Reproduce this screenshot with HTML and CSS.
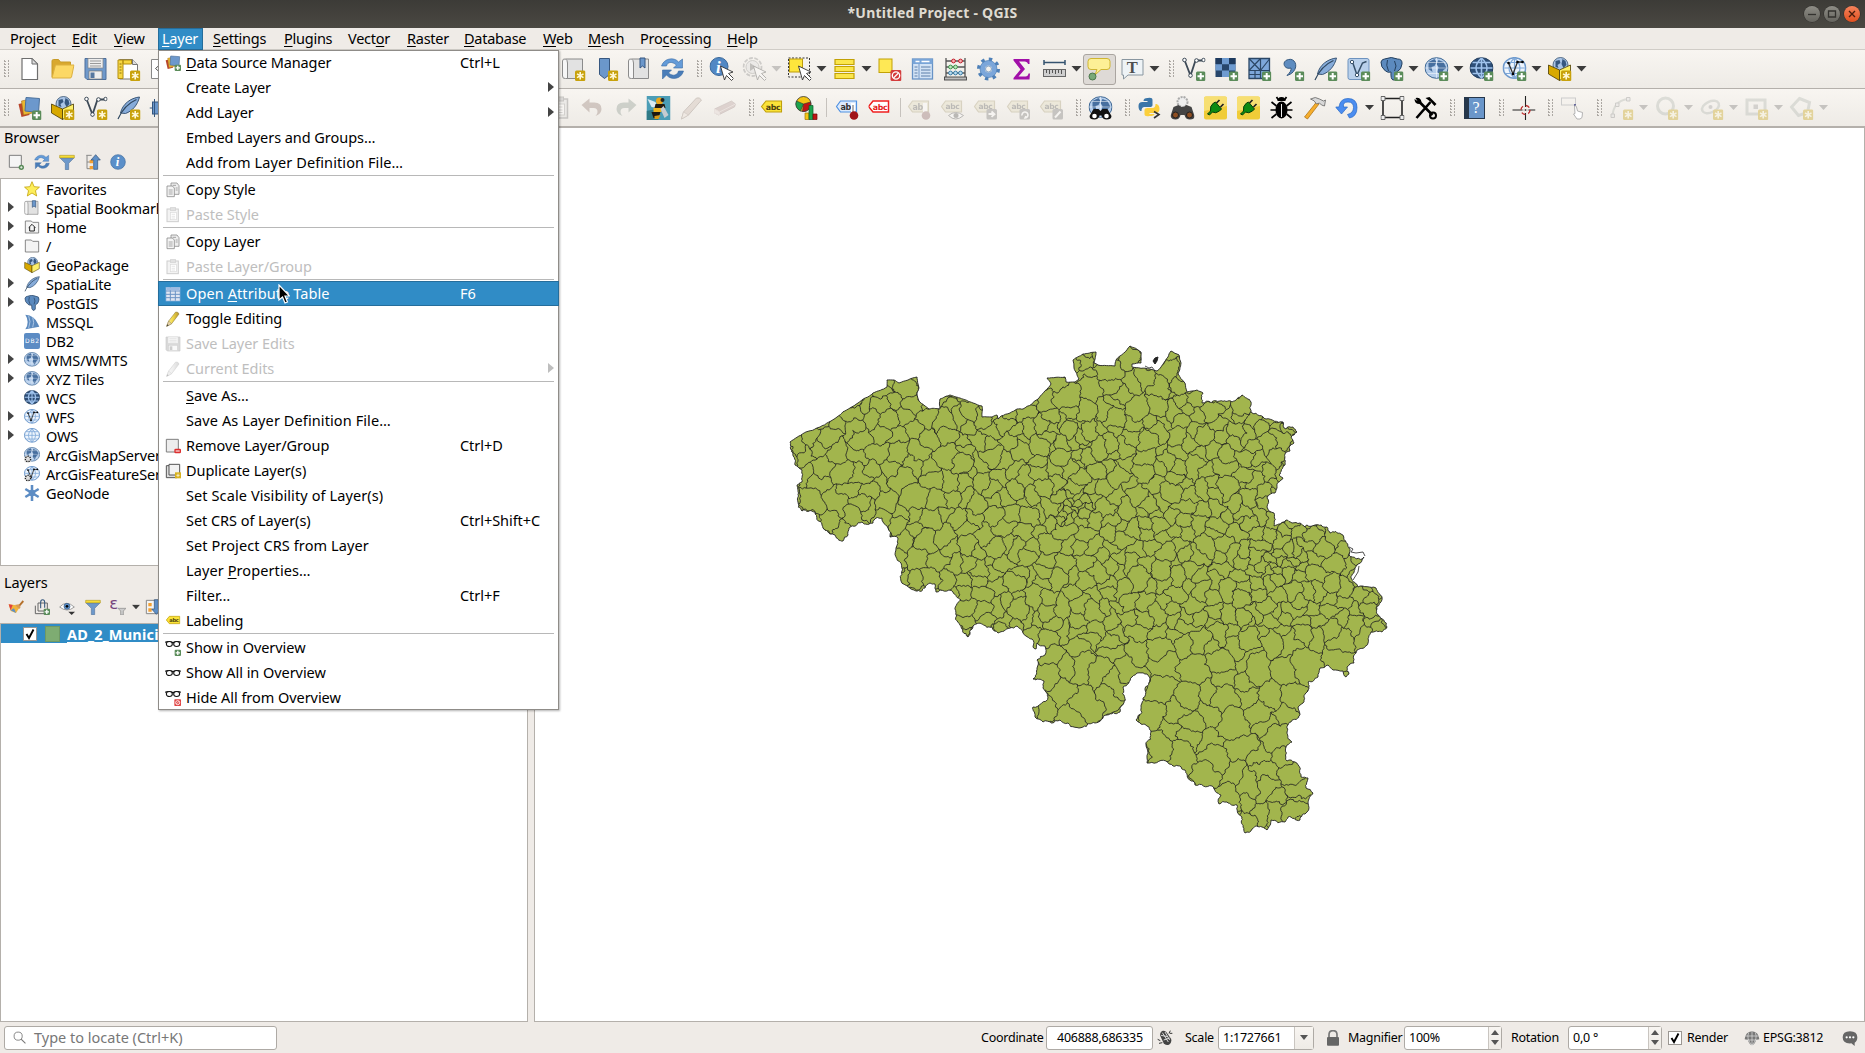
FILE: index.html
```html
<!DOCTYPE html>
<html lang="en">
<head>
<meta charset="utf-8">
<title>*Untitled Project - QGIS</title>
<link rel="stylesheet" href="styles.css">
</head>
<body>
<svg class="sprite" width="0" height="0">
<defs>
<linearGradient id="pgrad" x1="0" y1="0" x2="1" y2="0"><stop offset="0" stop-color="#fff4a0"/><stop offset=".5" stop-color="#f0d84a"/><stop offset="1" stop-color="#b8962a"/></linearGradient>
</defs>
<symbol id="plus" viewBox="0 0 24 24"><rect x="14.5" y="14.5" width="9.5" height="9.5" rx="1.5" fill="#5b8c5a"/><path d="M19.2 16v6.500M16 19.200h6.500" stroke="#fff" stroke-width="2"/></symbol>
<symbol id="star" viewBox="0 0 24 24"><rect x="13.500" y="13.500" width="10.500" height="10.500" rx="1.500" fill="#c8a20c"/><path d="M18.700 15v7.500M15.500 16.900l6.500 3.700M22 16.900l-6.500 3.700" stroke="#fff8d8" stroke-width="1.600"/></symbol>
<symbol id="new" viewBox="0 0 24 24"><path d="M4.500 1.500h10l5.500 5.500v15.500H4.500z" fill="#fff" stroke="#6e6e6e" stroke-width="1.200"/><path d="M14.500 1.500V7H20z" fill="#ddd" stroke="#6e6e6e"/></symbol>
<symbol id="open" viewBox="0 0 24 24"><path d="M1.500 20V4q0-1.500 1.500-1.500h5L10 5h10v3" fill="#d9a82f" stroke="#c89b28"/><path d="M1.500 21L5 8h18.500L21 20q-.3 1-1.500 1z" fill="#fcd865" stroke="#dcb040"/></symbol>
<symbol id="save" viewBox="0 0 24 24"><path d="M1.500 1.500h21v21h-19l-2-2z" fill="#6f99cb" stroke="#4e6f9b"/><rect x="4.500" y="1.500" width="15" height="9.500" fill="#eee" stroke="#888" stroke-width=".7"/><path d="M6.500 4h11M6.500 6.500h11M6.500 9h11" stroke="#999"/><rect x="5.500" y="14" width="13" height="8" fill="#eee" stroke="#777" stroke-width=".7"/><rect x="7" y="15.500" width="4" height="5.500" fill="#56779f"/></symbol>
<symbol id="layout" viewBox="0 0 24 24"><path d="M3 2.500h13l5 5V22H3z" fill="#fff" stroke="#777"/><path d="M16 2.500v5h5" fill="#ddd" stroke="#777"/><path d="M1.500 3h5v18.500h-5zM6.500 3H15v4H6.500z" fill="#f7d743" stroke="#b28d10"/><path d="M3 7h2M3 10h2M3 13h2M3 16h2" stroke="#8c7015"/><use href="#star"/></symbol>
<symbol id="page" viewBox="0 0 24 24"><path d="M2 2.500h16v19H2z" fill="#fff" stroke="#888"/><path d="M10 8l-4 3.500 4 3.500" fill="none" stroke="#555"/></symbol>
<symbol id="stack" viewBox="0 0 24 24"><path d="M1 8l9-2 2 13-8 2z" fill="#b9452b"/><path d="M4 5l9-2 2 14-9 2z" fill="#e9b731" stroke="#a66c18" stroke-width=".6"/><path d="M8.500 1.500l13.500 1-1 14-13.500-1.500z" fill="#6c98cc" stroke="#4b719d"/></symbol>
<symbol id="dsm" viewBox="0 0 24 24"><use href="#stack"/><use href="#plus"/></symbol>
<symbol id="boxo" viewBox="0 0 24 24"><circle cx="13" cy="8" r="7.500" fill="#a9c4e6" stroke="#35516f" stroke-width=".8"/><path d="M8 4l4-1 1 3-3 2 1 3-3-1zM15 2l3 2 1 4-3 3-2-4z" fill="#36577f"/><path d="M1 8l11 5v10.500L1 17z" fill="#d8a900" stroke="#4a3b00" stroke-width=".8"/><path d="M12 13l11-5v9.500l-11 6z" fill="#fdf06a" stroke="#4a3b00" stroke-width=".8"/></symbol>
<symbol id="box" viewBox="0 0 24 24"><use href="#boxo"/><use href="#star"/></symbol>
<symbol id="vee" viewBox="0 0 24 24"><path d="M3 3l6 15.500L14 3.500h7" fill="none" stroke="#3d4a57" stroke-width="1.800"/><circle cx="3" cy="3" r="1.800" fill="#fff" stroke="#3d4a57"/><circle cx="9" cy="18.500" r="1.800" fill="#fff" stroke="#3d4a57"/><circle cx="15" cy="3.500" r="1.800" fill="#fff" stroke="#3d4a57"/><circle cx="22" cy="3" r="1.700" fill="#fff" stroke="#3d4a57"/></symbol>
<symbol id="veep" viewBox="0 0 24 24"><use href="#vee"/><use href="#plus"/></symbol>
<symbol id="vees" viewBox="0 0 24 24"><use href="#vee"/><use href="#star"/></symbol>
<symbol id="quill" viewBox="0 0 24 24"><path d="M23 1C14 2 6 8 4 17l5 .5C16 15 21 9 23 1z" fill="#86abd9" stroke="#3a5676"/><path d="M1.500 23C5 15 12 7 20 3.500" fill="none" stroke="#2f475f" stroke-width="1.200"/></symbol>
<symbol id="quillp" viewBox="0 0 24 24"><use href="#quill"/><use href="#plus"/></symbol>
<symbol id="quills" viewBox="0 0 24 24"><use href="#quill"/><use href="#star"/></symbol>
<symbol id="chip" viewBox="0 0 24 24"><rect x="3" y="6" width="14" height="12" fill="#6c98cc" stroke="#34567e"/><path d="M5 3v18M10 3v18M0 12h3" stroke="#34567e"/></symbol>
<symbol id="map" viewBox="0 0 24 24"><path d="M4 2h17v19.500H5z" fill="#e2e2e2" stroke="#8b8b8b"/><path d="M4 2q-3-.5-3 2v15q0 3 3 2.500h2V6q0-3-2-4z" fill="#f6f6f6" stroke="#8b8b8b"/></symbol>
<symbol id="maps" viewBox="0 0 24 24"><use href="#map"/><use href="#star"/></symbol>
<symbol id="mapb" viewBox="0 0 24 24"><use href="#map"/><path d="M12.500 1h5v10L15 9l-2.500 2z" fill="#6b97cb" stroke="#375780"/></symbol>
<symbol id="book" viewBox="0 0 24 24"><path d="M5 1.500h10v16l-5 4-5-4z" fill="#6b97cb" stroke="#375780"/><use href="#star"/></symbol>
<symbol id="refresh" viewBox="0 0 24 24"><path d="M1 9C3 2 13-1 18 5l4-3v9h-9l3-3C11 4 7 5 6 9z" fill="#649bd8" stroke="#3b6ba4" stroke-width=".6"/><path d="M23 14c-2 8-12 10-17 4l-4 4v-9h9l-3 3c5 4 9 2 10-2z" fill="#4a7db8" stroke="#3b6ba4" stroke-width=".6"/></symbol>
<symbol id="arrow" viewBox="0 0 24 24"><path d="M11 9l12.500 6-4.500 1.500 5 5-2 2-5-5-2 4.500z" fill="#fff" stroke="#333" stroke-width=".9"/></symbol>
<symbol id="info" viewBox="0 0 24 24"><circle cx="9.500" cy="9.500" r="9" fill="#5288c4" stroke="#3a6799"/><text x="6.500" y="15.500" font-family="Liberation Serif" font-style="italic" font-weight="bold" font-size="17" fill="#fff">i</text></symbol>
<symbol id="ident" viewBox="0 0 24 24"><use href="#info"/><use href="#arrow"/></symbol>
<symbol id="gear" viewBox="0 0 24 24"><circle cx="12" cy="12" r="9.500" fill="none" stroke="#4e80b8" stroke-width="4" stroke-dasharray="3.300 4.160"/><circle cx="12" cy="12" r="6" fill="none" stroke="#7ba6da" stroke-width="5"/><circle cx="12" cy="12" r="8.500" fill="none" stroke="#4e80b8" stroke-width=".7"/><circle cx="12" cy="12" r="3" fill="#f3f0ec" stroke="#4e80b8" stroke-width=".7"/></symbol>
<symbol id="gact" viewBox="0 0 24 24"><circle cx="10" cy="10" r="9" fill="none" stroke="#888" stroke-width="1.800" stroke-dasharray="4 1.500"/><circle cx="10" cy="10" r="6.500" fill="#ddd" stroke="#888"/><path d="M7.500 6l6 4-6 4z" fill="#666"/><use href="#arrow"/></symbol>
<symbol id="sel" viewBox="0 0 24 24"><rect x="1" y="1" width="21" height="19" fill="none" stroke="#333" stroke-dasharray="2 1.500"/><rect x="2" y="2" width="13" height="13" fill="#fee63c" stroke="#bd9c0a"/><use href="#arrow"/></symbol>
<symbol id="bars" viewBox="0 0 24 24"><path d="M2.500 2.500h19v5h-19zM2.500 9.500h19v5h-19zM2.500 16.500h19v5h-19z" fill="#fbe64c" stroke="#c2a106" stroke-width="1.200"/></symbol>
<symbol id="desel" viewBox="0 0 24 24"><rect x="1.500" y="2" width="13" height="13.500" fill="#fee855" stroke="#c2a106"/><rect x="13" y="13" width="11" height="11" rx="1.500" fill="#d43c3c"/><circle cx="18.500" cy="18.500" r="3.700" fill="none" stroke="#fff" stroke-width="1.300"/><path d="M16 21l5-5" stroke="#fff" stroke-width="1.300"/></symbol>
<symbol id="table" viewBox="0 0 24 24"><rect x="2" y="2" width="20" height="20" fill="#d3e3f5" stroke="#6792c5" stroke-width="1.300"/><path d="M2 2h20v5H2z" fill="#79a5d8"/><path d="M5 4.500h4M11 4.500h8" stroke="#fff" stroke-width="1.300"/><path d="M8.500 7v15" stroke="#7398c7"/><path d="M4 10h3M4 13h3M4 16h3M4 19h3M10.500 10H20M10.500 13H20M10.500 16H20M10.500 19H20" stroke="#5c7fa9"/></symbol>
<symbol id="tablew" viewBox="0 0 24 24"><rect x="1.500" y="2" width="21" height="20.500" fill="#dfe6f2" stroke="#8fb2dc"/><path d="M1.500 7.500h21M8 2v20M15.500 7v15M1.500 12.500h21M1.500 17.500h21" stroke="#6c93c4" stroke-width="1.500"/><path d="M2 2.500h20v4H2z" fill="#9dbbe2"/></symbol>
<symbol id="abacus" viewBox="0 0 24 24"><path d="M2.500 1v19M21.500 1v19M3 4h18M3 10h18M3 16h18" stroke="#555" stroke-width="1.300"/><rect x="1" y="20" width="22" height="3" fill="#bbb" stroke="#444" stroke-width=".9"/><g fill="#f6b1b1" stroke="#c21f2c"><circle cx="10" cy="4" r="1.900"/><circle cx="17" cy="4" r="1.900"/></g><g fill="#bce6bc" stroke="#3e924a"><circle cx="7" cy="10" r="1.900"/><circle cx="12" cy="10" r="1.900"/></g><g fill="#b8dcf1" stroke="#3a7ca5"><circle cx="7" cy="16" r="1.900"/><circle cx="12" cy="16" r="1.900"/><circle cx="17" cy="16" r="1.900"/></g></symbol>
<symbol id="sigma" viewBox="0 0 24 24"><path d="M4 2h16v5h-1.500Q18 4.500 15 4.500H9.500l6 7.500L9 19.500h7q2.500 0 3-3h1.500L20 22.500H4V21l7-8.500L4 3.500z" fill="#a10fa8"/></symbol>
<symbol id="meas" viewBox="0 0 24 24"><path d="M1.500 5.500h21M1.500 3v5M22.500 3v5" stroke="#35536f" stroke-width="1.500"/><rect x="1" y="12.500" width="22" height="7" fill="#cfcfcf" stroke="#666"/><path d="M4 13v3M7 13v4M10 13v3M13 13v4M16 13v3M19 13v4" stroke="#555"/></symbol>
<symbol id="tip" viewBox="0 0 24 24"><path d="M4 1.500h16q3 0 3 3v5q0 3-3 3h-6L8 18l2-5.500H4q-3 0-3-3v-5q0-3 3-3z" fill="#fdf096" stroke="#cfb533"/><circle cx="5.500" cy="19.500" r="3.500" fill="#78a978" stroke="#4c774c"/></symbol>
<symbol id="tt" viewBox="0 0 24 24"><path d="M1.500 2.500h21v15.500H7.500L3 22v-4H1.500z" fill="#eef3f6" stroke="#8996a0"/><text x="6.200" y="15.500" font-family="Liberation Serif" font-weight="bold" font-size="16.500" fill="#4f4f4f">T</text></symbol>
<symbol id="raster" viewBox="0 0 24 24"><path d="M1 1h20v19H1z" fill="#27466b"/><path d="M1 1h7v6H1zM14.500 1H21v6h-6.500z" fill="#1e3a5e"/><path d="M7.500 1h7v6.300h-7zM1 7.300h6.500v6.300H1zM14.500 7.300H21v6.300h-6.500zM7.500 13.600h7V20h-7z" fill="#6e9bd0"/><use href="#plus"/></symbol>
<symbol id="mesh" viewBox="0 0 24 24"><path d="M1.500 1.500h20.500v20H1.500z" fill="#7da7da" stroke="#2c4766" stroke-width="1.300"/><path d="M1.500 13.500H22M13 1.500v20M1.500 1.500L13 13.500M13 1.500L1.500 13.500M22 2L13 13.500M7.500 13.500v8M1.500 17.500H13" stroke="#2c4766" stroke-width="1.200"/><use href="#plus"/></symbol>
<symbol id="comma" viewBox="0 0 24 24"><path d="M8 2.500c6-1.500 10 6 5 12-2 2.500-5 3.500-6.500 4 3-3 4.500-5 4-7.500C5 12.500 2.500 8 4 5q1-2 4-2.500z" fill="#5e8cc0" stroke="#35587e"/><use href="#plus"/></symbol>
<symbol id="vbox" viewBox="0 0 24 24"><rect x="1.500" y="1.500" width="21" height="21" rx="2" fill="#b9d0eb" stroke="#6e93bf"/><path d="M6 5l4.500 13L16 6l4-1.500" fill="none" stroke="#375069" stroke-width="1.500"/><circle cx="5.500" cy="5" r="1.700" fill="#fff" stroke="#375069"/><circle cx="10.500" cy="18" r="1.700" fill="#fff" stroke="#375069"/><use href="#plus"/></symbol>
<symbol id="eleo" viewBox="0 0 24 24"><path d="M5 2q7-3 13 0 5 0 4.500 5-1 6-4 7l-1.500 1v6q-1 2.500-3.500 2-2.500-1-2-8-3 1-5.500-1Q1 10 1.500 5 2.500 2 5 2z" fill="#5c8abe" stroke="#24405f"/><path d="M8 3q-2 5 1 11M15 4q3 5 0 10" fill="none" stroke="#24405f"/></symbol>
<symbol id="ele" viewBox="0 0 24 24"><use href="#eleo"/><use href="#plus"/></symbol>
<symbol id="globeo" viewBox="0 0 24 24"><ellipse cx="12" cy="11" rx="11.500" ry="10.300" fill="#b4cdeb" stroke="#3e6793"/><path d="M4 5l6-3 2 3-2 4-3 1 1 5-4-3zM14 3l5 2 3 6-3 2-3 6-3-4 1-5-2-3z" fill="#476f9f"/><path d="M1 11h22M12 1v20M3 5.500h18M3 16.500h18" stroke="#fff" stroke-opacity=".5"/></symbol>
<symbol id="globe" viewBox="0 0 24 24"><use href="#globeo"/><use href="#plus"/></symbol>
<symbol id="globe2o" viewBox="0 0 24 24"><ellipse cx="12" cy="11" rx="11.500" ry="10.300" fill="#2e4f78" stroke="#213c5c"/><path d="M1 11h22M12 1v20M3 5.500h18M3 16.500h18M12 1Q1 11 12 21Q23 11 12 1" stroke="#9fc2ec" stroke-width="1.600" fill="none"/></symbol>
<symbol id="globe2" viewBox="0 0 24 24"><use href="#globe2o"/><use href="#plus"/></symbol>
<symbol id="ows" viewBox="0 0 24 24"><ellipse cx="12" cy="11" rx="11.300" ry="10.300" fill="#eef5fd" stroke="#6e99cc" stroke-width="1.500"/><path d="M1 11h22M12 1v20M3 5.500h18M3 16.500h18M12 1Q1 11 12 21Q23 11 12 1" stroke="#7fa8d8" stroke-width="1.200" fill="none"/></symbol>
<symbol id="wfso" viewBox="0 0 24 24"><use href="#ows"/><path d="M6 6l4.500 11L15 5h5" fill="none" stroke="#333" stroke-width="1.300"/><circle cx="6" cy="6" r="1.300"/><circle cx="15" cy="5" r="1.300"/><circle cx="10.500" cy="17" r="1.300"/><circle cx="20" cy="5" r="1.300"/></symbol>
<symbol id="wfs" viewBox="0 0 24 24"><use href="#wfso"/><use href="#plus"/></symbol>
<symbol id="clip" viewBox="0 0 24 24"><rect x="3" y="3" width="17" height="19" fill="#ddd" stroke="#777" stroke-width="1.500"/><rect x="8" y="1" width="8" height="4" fill="#aaa" stroke="#777"/><rect x="8" y="8" width="9" height="11" fill="#fff" stroke="#999"/><path d="M10 11h5M10 14h5M10 16.500h5" stroke="#999"/></symbol>
<symbol id="undo" viewBox="0 0 24 24"><path d="M1 9l8-6.500V6.500h5q7 0 7 6.500 0 5-6 7 2-2 2-4 0-4-4-4H9v4.500z" fill="#917a72"/></symbol>
<symbol id="redo" viewBox="0 0 24 24"><path d="M23 9l-8-6.500V6.500h-5q-7 0-7 6.500 0 5 6 7-2-2-2-4 0-4 4-4h4v4.500z" fill="#87948b"/></symbol>
<symbol id="bee" viewBox="0 0 24 24"><rect width="24" height="24" fill="#4b9db6"/><path d="M0 15l10-2 2 11H0z" fill="#307a86"/><path d="M1 3l8 3 2 6-6-1z" fill="#d9eaf2"/><circle cx="13" cy="5" r="3.500" fill="#e9a61b"/><circle cx="16" cy="4" r="2" fill="#222"/><path d="M9 8h9l1 4H8z" fill="#22190d"/><path d="M7 12h8v4H7z" fill="#eeb41e"/><path d="M5 16h9l-2 6H7z" fill="#1d1710"/><path d="M17 10l5 9-4 3-4-9z" fill="#c6cbd0"/><path d="M8 20l6-1-2 4H8z" fill="#d79a19"/></symbol>
<symbol id="pencil" viewBox="0 0 24 24"><path d="M2.500 23l3-8L16 1.500q4-.5 5 3L10 19z" fill="url(#pgrad)" stroke="#87743a" stroke-width=".8"/><path d="M2.500 23l3-8L10 19z" fill="#e8d5ae" stroke="#87743a" stroke-width=".6"/><path d="M2.500 23l1-3 2 1.500z" fill="#333"/></symbol>
<symbol id="pen2" viewBox="0 0 24 24"><path d="M2 23l2-7L17 2q3-1 5 2L9 19z" fill="#c9b6ab" stroke="#8a7a70"/><path d="M2 23l2-7 5 3z" fill="#eee2d8" stroke="#8a7a70" stroke-width=".6"/></symbol>
<symbol id="eraser" viewBox="0 0 24 24"><path d="M2 13L19 5l4 3-1 3L6 19l-4-2z" fill="#b59a98" stroke="#8c7776" stroke-width=".7"/><path d="M2 13l5 3 0 3-5-2zM7 16L23 8" fill="#e5d6d4" stroke="#d8c8c6"/></symbol>
<symbol id="abc" viewBox="0 0 24 24"><path d="M2 10.500l4.500-5.500H22v11H6.500z" fill="#fbe338" stroke="#c0a00d" stroke-width="1.100"/><text x="6.300" y="13.800" font-family="DejaVu Sans" font-weight="bold" font-size="7.800" textLength="14.500" fill="#4a410f">abc</text></symbol>
<symbol id="abcr" viewBox="0 0 24 24"><path d="M0 10.500l4.500-5.500H20v11H4.500z" fill="#fff" stroke="#f02020" stroke-width="1.500"/><text x="4.300" y="13.800" font-family="DejaVu Sans" font-weight="bold" font-size="7.800" textLength="14.500" fill="#e31c1c">abc</text></symbol>
<symbol id="abt" viewBox="0 0 24 24"><path d="M1 10.500l4-5.500h16v11H5z" fill="#dcebfd" stroke="#4f91e2" stroke-width="1.200"/><text x="5" y="13.500" font-family="DejaVu Sans" font-weight="bold" font-size="8" fill="#333">ab</text><path d="M17.500 7v12" stroke="#fff" stroke-width="4"/><path d="M17.500 9v10" stroke="#999" stroke-width="1.500"/><circle cx="18.500" cy="19.500" r="4.300" fill="#a0141a"/></symbol>
<symbol id="abg" viewBox="0 0 24 24"><path d="M1 10.500l4-5.500h16v11H5z" fill="#dfd8b9" stroke="#a69b73" stroke-width="1.200"/><text x="5" y="13.500" font-family="DejaVu Sans" font-weight="bold" font-size="8" fill="#555">ab</text><path d="M17.500 7v12" stroke="#fff" stroke-width="4"/><circle cx="18.500" cy="19.500" r="4.300" fill="#8c6464"/></symbol>
<symbol id="abx" viewBox="0 0 24 24"><path d="M1 10.500l4-5.500h16v11H5z" fill="#dfd8b9" stroke="#a69b73" stroke-width="1.200"/><text x="5" y="13.200" font-family="DejaVu Sans" font-weight="bold" font-size="7.500" textLength="14" fill="#555">abc</text><rect x="13" y="13" width="10.500" height="10.500" rx="1.500" fill="#777"/><path d="M15 18h5M18 15.500l3 2.700-3 2.700" fill="none" stroke="#fff" stroke-width="1.800"/></symbol>
<symbol id="abr" viewBox="0 0 24 24"><path d="M1 10.500l4-5.500h16v11H5z" fill="#dfd8b9" stroke="#a69b73" stroke-width="1.200"/><text x="5" y="13.200" font-family="DejaVu Sans" font-weight="bold" font-size="7.500" textLength="14" fill="#555">abc</text><rect x="13" y="13" width="10.500" height="10.500" rx="1.500" fill="#777"/><path d="M15.500 19.500a3 3 0 1 1 3 2.500l1-2" fill="none" stroke="#fff" stroke-width="1.600"/></symbol>
<symbol id="abp" viewBox="0 0 24 24"><path d="M1 10.500l4-5.500h16v11H5z" fill="#dfd8b9" stroke="#a69b73" stroke-width="1.200"/><text x="5" y="13.200" font-family="DejaVu Sans" font-weight="bold" font-size="7.500" textLength="14" fill="#555">abc</text><rect x="13" y="13" width="10.500" height="10.500" rx="1.500" fill="#777"/><path d="M15.500 21.500l5.500-6" stroke="#fff" stroke-width="2"/></symbol>
<symbol id="abeye" viewBox="0 0 24 24"><path d="M1 10.500l4-5.500h16v11H5z" fill="#dfd8b9" stroke="#a69b73" stroke-width="1.200"/><text x="5" y="13.200" font-family="DejaVu Sans" font-weight="bold" font-size="7.500" textLength="14" fill="#555">abc</text><path d="M8 19.500q7-6 15 0-8 7-15 0z" fill="#fff" stroke="#555"/><circle cx="15.500" cy="19.500" r="2.500" fill="#555"/></symbol>
<symbol id="chart" viewBox="0 0 24 24"><circle cx="9" cy="8" r="7.500" fill="#f3c514" stroke="#333" stroke-width=".8"/><path d="M9 8L2 5a7.500 7.500 0 0 0 4 10z" fill="#1ba34e" stroke="#333" stroke-width=".6"/><path d="M9 8l7-2a7.500 7.500 0 0 1-8 9.500z" fill="#c01414" stroke="#333" stroke-width=".6"/><path d="M10.500 17h4v6.500h-4z" fill="#f3c514" stroke="#a27905" stroke-width=".7"/><path d="M14.500 9.500h4v14h-4z" fill="#1ba34e" stroke="#0d5a2a" stroke-width=".7"/><path d="M18.500 18h4v5.500h-4z" fill="#c01414" stroke="#6d0a0a" stroke-width=".7"/></symbol>
<symbol id="bino" viewBox="0 0 24 24"><path d="M5 13h5l2 2 2-2h5l4 7q0 3.500-5 3.500-4 0-5-4h-2q-1 4-5 4-5 0-5-3.500z" fill="#111"/><circle cx="6" cy="20" r="2.300" fill="#fff"/><circle cx="18" cy="20" r="2.300" fill="#fff"/></symbol>
<symbol id="gbino" viewBox="0 0 24 24"><use href="#globeo"/><use href="#bino"/></symbol>
<symbol id="python" viewBox="0 0 24 24"><path d="M10 2q5-1 5 2v5q0 2-3 2H7q-3 0-3 4H3q-2-1-2-5 0-4 4-4h5V5H6q0-3 4-3z" fill="#3a75a8"/><path d="M12 20q-5 1-5-2v-4q0-2 3-2h5q3 0 3-4h1q3 1 3 5t-4 4h-6v1h5q0 2-5 2z" fill="#fbcf3c"/><path d="M16.500 15.500l5 3-5 3.500" fill="none" stroke="#333" stroke-width="1.600"/></symbol>
<symbol id="bino2" viewBox="0 0 24 24"><circle cx="12" cy="6" r="5" fill="#eee" stroke="#aaa" stroke-width="2" stroke-dasharray="2 1"/><path d="M3 11l5-2 3 2h2l3-2 5 2 3 9q0 3.500-4.500 3.500T14 19h-4q-1 4.500-5 4.500T0 20z" fill="#444"/><circle cx="5" cy="19" r="3" fill="#8f4f22" stroke="#222"/><circle cx="19" cy="19" r="3" fill="#8f4f22" stroke="#222"/></symbol>
<symbol id="plug" viewBox="0 0 24 24"><rect x=".5" y=".5" width="23" height="23" rx="2" fill="#f0cc38"/><path d="M.500 2q0-1.500 1.500-1.500h20q1.500 0 1.500 1.500v8L.5 15z" fill="#f7df72"/><path d="M4 18l3-3q-1-5 3-8l2-1 6 7-2 2q-4 3-7 1l-3 3z" fill="#0c8a12" stroke="#063f08"/><path d="M13 7l3-3M17 11l3-3" stroke="#222" stroke-width="1.700"/></symbol>
<symbol id="bug" viewBox="0 0 24 24"><ellipse cx="12" cy="14" rx="6" ry="8.500" fill="#000"/><path d="M8 5q0-4 4-4t4 4z"/><path d="M2 6l5 4M22 6l-5 4M1 14h6M23 14h-6M2 22l5-4M22 22l-5-4M7 1l2 3M17 1l-2 3" stroke="#000" stroke-width="1.700"/><path d="M12 8v13" stroke="#eee"/></symbol>
<symbol id="hammer" viewBox="0 0 24 24"><path d="M14 6l2.500 2L5 23l-3-2z" fill="#f6ae2d" stroke="#a96c0c" stroke-width=".7"/><path d="M8 3q5-3 9 0l4 2 2-1-1 6-3-1-2-2-3 1q-2-4-6-5z" fill="#d8d8d8" stroke="#666" stroke-width=".8"/></symbol>
<symbol id="rot" viewBox="0 0 24 24"><path d="M0 11h3.500q1-8.500 9-8.500 9 0 9 9T14 22l-2-3.500q6-1.500 6-7t-5.500-5.500T8 11h4l-6 7z" fill="#4b8df0" stroke="#2768c6" stroke-width=".7"/></symbol>
<symbol id="frame" viewBox="0 0 24 24"><path d="M2.500 2.500h19v19h-19z" fill="none" stroke="#222" stroke-width="1.600"/><g fill="#eee" stroke="#666"><path d="M.500.500h4v4h-4zM19.500.500h4v4h-4zM.500 19.500h4v4h-4zM19.500 19.500h4v4h-4z"/></g></symbol>
<symbol id="tools" viewBox="0 0 24 24"><path d="M6 6l13 13M3 22L17 6" stroke="#000" stroke-width="2.600"/><path d="M2 2q5-1 6 4l-2 2Q1 8 1 3l3 2zM12 2l4-1 7 7-2 2q-4-5-9-8z"/><circle cx="19.500" cy="19.500" r="3" fill="none" stroke="#000" stroke-width="2"/></symbol>
<symbol id="help" viewBox="0 0 24 24"><rect x="2" y="1.500" width="20" height="21" fill="#6a96ca" stroke="#26374b"/><rect x="2" y="1.500" width="4.500" height="21" fill="#26374b"/><text x="10" y="17" font-family="Liberation Serif" font-size="16" fill="#fff">?</text></symbol>
<symbol id="cross" viewBox="0 0 24 24"><path d="M14 0v24M1 14h23" stroke="#222" stroke-width="1.100"/><circle cx="14" cy="14" r="4.500" fill="none" stroke="#c03030" stroke-width="1.400" stroke-dasharray="4 3"/><path d="M14 11v6M11 14h6" stroke="#f3f0ec" stroke-width="1.500"/><circle cx="14" cy="14" r=".8"/></symbol>
<symbol id="recth" viewBox="0 0 24 24"><rect x="1" y="2" width="14" height="7" fill="none" stroke="#ccc"/><circle cx="14.500" cy="9" r="1" fill="#448"/><path d="M14 10q1.500-1 2 1l1 4 5 1.500-.5 5-2 1.500h-3l-3.500-5 1.500-.5z" fill="#fff" stroke="#aaa" stroke-width=".9"/></symbol>
<symbol id="s1" viewBox="0 0 24 24"><path d="M3 20Q4 5 18 3" fill="none" stroke="#aeb5ae" stroke-width="2"/><path d="M1.500 18h3.500v3.500H1.500zM6 7h3.500v3.500H6zM17 1.500h3.500V5H17z" fill="#ddd" stroke="#888"/><use href="#star"/></symbol>
<symbol id="s2" viewBox="0 0 24 24"><circle cx="11" cy="10" r="8" fill="none" stroke="#aeb5ae" stroke-width="3"/><use href="#star"/></symbol>
<symbol id="s3" viewBox="0 0 24 24"><ellipse cx="11" cy="11" rx="9" ry="5.500" transform="rotate(-25 11 11)" fill="none" stroke="#aeb5ae" stroke-width="2.500"/><circle cx="11" cy="11" r="2" fill="#999"/><use href="#star"/></symbol>
<symbol id="s4" viewBox="0 0 24 24"><rect x="2.500" y="4" width="18" height="14" fill="none" stroke="#aeb5ae" stroke-width="3"/><rect x="9" y="8.500" width="4.500" height="4.500" fill="#999"/><use href="#star"/></symbol>
<symbol id="s5" viewBox="0 0 24 24"><path d="M10 2.500l10 4-2 10-9 3L2 11z" fill="none" stroke="#aeb5ae" stroke-width="3"/><use href="#star"/></symbol>
<symbol id="addl" viewBox="0 0 24 24"><path d="M2 2h18v18H2z" fill="#f5f5f5" stroke="#7f7f7f" stroke-width="1.500"/><circle cx="20" cy="20" r="4" fill="#5b8c5a"/><path d="M18 20h4M20 18v4" stroke="#fff"/></symbol>
<symbol id="funnel" viewBox="0 0 24 24"><path d="M1 2h22v4H1z" fill="#f6dc37" stroke="#a58c12" stroke-width=".8"/><path d="M2 6.500h20L14.500 14v9.500h-5V14z" fill="#6d98cb" stroke="#47698f" stroke-width=".8"/></symbol>
<symbol id="coll" viewBox="0 0 24 24"><path d="M2 2h8M3 2v20h6M3 12h8" fill="none" stroke="#888" stroke-width="1.500"/><path d="M7 9h5v5H7zM7 18h5v5H7z" fill="#f3a032"/><path d="M16 1l7 8h-4v14h-6V9H9z" fill="#5f8fc6" stroke="#2e4d74"/></symbol>
<symbol id="collb" viewBox="0 0 24 24"><path d="M2 2h18v20H2z" fill="#f5f5f5" stroke="#888" stroke-width="1.500"/><path d="M5 6h5v5H5zM5 14h5v5H5z" fill="#f3a032"/><path d="M17 23l-7-8h4V1h6v14h4z" fill="#5f8fc6" stroke="#2e4d74"/></symbol>
<symbol id="infoc" viewBox="0 0 24 24"><circle cx="12" cy="12" r="11" fill="#5b8fc9" stroke="#3f6c9e"/><text x="8.500" y="18.500" font-family="Liberation Serif" font-style="italic" font-weight="bold" font-size="19" fill="#fff">i</text></symbol>
<symbol id="fav" viewBox="0 0 24 24"><path d="M12 1l3.200 7.500 8 .7-6 5.300 1.800 8L12 18l-7 4.500 1.800-8-6-5.300 8-.7z" fill="#fdee5b" stroke="#c2a106" stroke-width="1.200"/></symbol>
<symbol id="folder" viewBox="0 0 24 24"><path d="M2 3h9l2 2h9v16H2z" fill="#f4f4f4" stroke="#777" stroke-width="1.300"/></symbol>
<symbol id="home" viewBox="0 0 24 24"><use href="#folder"/><path d="M7 13l5-5 5 5M8.500 12v6h7v-6" fill="none" stroke="#222" stroke-width="1.500"/></symbol>
<symbol id="mssql" viewBox="0 0 24 24"><path d="M2 1q14 1 19 14l2 4q-10 2-21 4Q9 12 2 1z" fill="#5c8abe"/><path d="M7 3q4 8 0 18M13 5q3 8 0 15" fill="none" stroke="#bcd3ee" stroke-width="1.200"/></symbol>
<symbol id="db2" viewBox="0 0 24 24"><rect x="0" y="0" width="24" height="24" rx="3" fill="#5c8cc4"/><text x="1.500" y="15" font-family="DejaVu Sans" font-size="9" textLength="21" fill="#fff">DB2</text></symbol>
<symbol id="flake" viewBox="0 0 24 24"><path d="M12 0v24M2 6l20 12M2 18L22 6" stroke="#5c8cc4" stroke-width="3.800"/><circle cx="12" cy="12" r="5" fill="#5c8cc4"/></symbol>
<symbol id="arcm" viewBox="0 0 24 24"><use href="#globeo"/><path d="M1 23v-8l4-3 5 3v8z" fill="#ddd"/><circle cx="6" cy="18" r="4" fill="none" stroke="#222" stroke-width="2" stroke-dasharray="2 1.500"/></symbol>
<symbol id="arcf" viewBox="0 0 24 24"><use href="#wfso"/><circle cx="6" cy="18" r="4" fill="#ddd" stroke="#222" stroke-width="2" stroke-dasharray="2 1.500"/></symbol>
<symbol id="copy" viewBox="0 0 24 24"><path d="M9 1.500h9l3 4v13H9z" fill="#eee" stroke="#8a8a8a" stroke-width="1.200"/><path d="M3 6h8l3 3v13H3z" fill="#f5f5f5" stroke="#8a8a8a" stroke-width="1.200"/><path d="M5.500 12h6M5.500 15h6M5.500 18h6M11.500 5h5M16 9h3M16 12h3" stroke="#999" stroke-width="1.300"/></symbol>
<symbol id="rem" viewBox="0 0 24 24"><path d="M2 2h18v19H2z" fill="#ededed" stroke="#7f7f7f" stroke-width="1.500"/><rect x="14" y="16" width="10" height="7" rx="2" fill="#dd3030"/><path d="M16 19.500h6" stroke="#fff" stroke-width="1.600"/></symbol>
<symbol id="dup" viewBox="0 0 24 24"><path d="M2 4h16v18H2z" fill="#ddd" stroke="#555" stroke-width="1.500"/><path d="M6 2h16v16H6z" fill="#f2f2f2" stroke="#555" stroke-width="1.500"/><rect x="15" y="14" width="9" height="9" fill="#d8b21f"/><path d="M19.500 16v5M17 18.500h5" stroke="#fff"/></symbol>
<symbol id="gl" viewBox="0 0 24 24"><path d="M0 3.500Q5 1 12 4q7-3 12-.5" fill="none" stroke="#111" stroke-width="1.800"/><ellipse cx="6.500" cy="6" rx="4.500" ry="3.800" fill="#fff" stroke="#111" stroke-width="1.600"/><ellipse cx="17.500" cy="6" rx="4.500" ry="3.800" fill="#fff" stroke="#111" stroke-width="1.600"/></symbol>
<symbol id="gla" viewBox="0 0 24 24"><use href="#gl"/><use href="#plus"/></symbol>
<symbol id="glm" viewBox="0 -6 24 24"><path d="M0 3.500Q5 1 12 4q7-3 12-.5" fill="none" stroke="#111" stroke-width="1.800"/><ellipse cx="6.500" cy="6" rx="4.500" ry="3.800" fill="#fff" stroke="#111" stroke-width="1.600"/><ellipse cx="17.500" cy="6" rx="4.500" ry="3.800" fill="#fff" stroke="#111" stroke-width="1.600"/></symbol>
<symbol id="glh" viewBox="0 0 24 24"><use href="#gl"/><rect x="14" y="14" width="10" height="10" rx="1" fill="#e04545"/><circle cx="19" cy="19" r="3" fill="none" stroke="#fff" stroke-width="1.300"/><path d="M17 21l4-4" stroke="#fff"/></symbol>
<symbol id="brush" viewBox="0 0 24 24"><path d="M15 10l7-8 2 2-7 8z" fill="#b5702a"/><path d="M1 8l9 1 7 4-5 8-8-3z" fill="#f2b43a"/><path d="M1 8l6 1-3 8z" fill="#e04040"/><path d="M4 17l5-3 3 7z" fill="#5b8fc9"/><path d="M10 9l6-1 3 4-2 3z" fill="#d99a52"/></symbol>
<symbol id="grp" viewBox="0 0 24 24"><path d="M6 6h14v12H6zM2 10v12h13" fill="none" stroke="#666" stroke-width="1.500"/><path d="M10 14V5q0-4 3-4t3 4v8" fill="none" stroke="#35587e" stroke-width="1.600"/><use href="#plus"/></symbol>
<symbol id="eye" viewBox="0 0 24 24"><path d="M1 12q10-11 22 0-11 9-22 0z" fill="#fff" stroke="#888" stroke-width="1.200"/><circle cx="12" cy="11" r="4.500" fill="#5b8fc9" stroke="#35587e"/><circle cx="12" cy="11" r="2"/><path d="M14 19h10l-5 5z" fill="#333"/></symbol>
<symbol id="eps" viewBox="0 0 24 24"><text x="-1" y="15" font-family="DejaVu Sans" font-size="25" fill="#76467f">ε</text><path d="M12 14h12l-4 4v6h-4v-6z" fill="#ccc" stroke="#888"/></symbol>
<symbol id="mouse" viewBox="0 0 24 24"><path d="M6 3q3-4 8 0l7 10q2 6-3 9-5 2-8-2L5 9q-1-3 1-6z" fill="#444"/><path d="M8 4l9 14M12 3l7 12M6 8l10 2M10 15l9-3" stroke="#eee" stroke-width="1.300"/><path d="M20 1l-2 4M23 5h-4M1 14l4 2M3 20l5-1" stroke="#333" stroke-width="1.500"/></symbol>
<symbol id="lock" viewBox="0 0 24 24"><path d="M6 11V7q0-6 6-6t6 6v4" fill="none" stroke="#777" stroke-width="2.500"/><rect x="3" y="10.500" width="18" height="13" rx="1.500" fill="#666"/></symbol>
<symbol id="crs" viewBox="0 0 24 24"><path d="M12 2Q22 3 23 14l-5 1q-1 6-6 8-5-2-6-8l-5-1Q2 3 12 2z" fill="#777"/><path d="M12 2v21M1 9h22M4 15h16M7 4q-4 9 5 19M17 4q4 9-5 19" stroke="#e5e5e5" fill="none"/></symbol>
<symbol id="msg" viewBox="0 0 24 24"><path d="M12 2q11 0 11 9 0 6-4 8v5l-5-4q-13 1-13-9Q1 2 12 2z" fill="#666"/><circle cx="7" cy="11" r="1.700" fill="#fff"/><circle cx="12" cy="11" r="1.700" fill="#fff"/><circle cx="17" cy="11" r="1.700" fill="#fff"/></symbol>
<symbol id="mag" viewBox="0 0 24 24"><circle cx="9.500" cy="9.500" r="7.500" fill="none" stroke="#777" stroke-width="1.600"/><path d="M15 15l8 8" stroke="#777" stroke-width="2"/></symbol>
</svg>

<header class="titlebar"><span class="title">*Untitled Project - QGIS</span>
<div class="winbtns"><span class="wb"><svg viewBox="0 0 16 16"><path d="M4 8.500h8" stroke="#33322e" stroke-width="1.300"/></svg></span><span class="wb"><svg viewBox="0 0 16 16"><path d="M4.500 5h7v6h-7z" fill="none" stroke="#33322e" stroke-width="1.300"/></svg></span><span class="wb close"><svg viewBox="0 0 16 16"><path d="M5 5l6 6M11 5l-6 6" stroke="#4a1d0c" stroke-width="1.400"/></svg></span></div></header>

<nav class="menubar"><span>Pro<u>j</u>ect</span><span><u>E</u>dit</span><span><u>V</u>iew</span><span class="active"><u>L</u>ayer</span><span><u>S</u>ettings</span><span><u>P</u>lugins</span><span>Vect<u>o</u>r</span><span><u>R</u>aster</span><span><u>D</u>atabase</span><span><u>W</u>eb</span><span><u>M</u>esh</span><span>Pro<u>c</u>essing</span><span><u>H</u>elp</span></nav>

<div class="toolbar">
<div class="lead"><i class="grip"></i><svg class="b"><use href="#new"/></svg><svg class="b"><use href="#open"/></svg><svg class="b"><use href="#save"/></svg><svg class="b"><use href="#layout"/></svg><svg class="b"><use href="#page"/></svg></div>
<svg class="b"><use href="#maps"/></svg><svg class="b"><use href="#book"/></svg><svg class="b"><use href="#mapb"/></svg><svg class="b"><use href="#refresh"/></svg><i class="grip"></i>
<svg class="b"><use href="#ident"/></svg><svg class="b off"><use href="#gact"/></svg><i class="dd off"></i><svg class="b"><use href="#sel"/></svg><i class="dd"></i><svg class="b"><use href="#bars"/></svg><i class="dd"></i><svg class="b"><use href="#desel"/></svg><svg class="b"><use href="#table"/></svg><svg class="b"><use href="#abacus"/></svg><svg class="b"><use href="#gear"/></svg><svg class="b"><use href="#sigma"/></svg><svg class="b"><use href="#meas"/></svg><i class="dd"></i><span class="pressed"><svg><use href="#tip"/></svg></span><svg class="b"><use href="#tt"/></svg><i class="dd"></i><i class="grip"></i>
<svg class="b"><use href="#veep"/></svg><svg class="b"><use href="#raster"/></svg><svg class="b"><use href="#mesh"/></svg><svg class="b"><use href="#comma"/></svg><svg class="b"><use href="#quillp"/></svg><svg class="b"><use href="#vbox"/></svg><svg class="b"><use href="#ele"/></svg><i class="dd"></i><svg class="b"><use href="#globe"/></svg><i class="dd"></i><svg class="b"><use href="#globe2"/></svg><svg class="b"><use href="#wfs"/></svg><i class="dd"></i><svg class="b"><use href="#box"/></svg><i class="dd"></i>
</div>
<div class="toolbar second">
<div class="lead"><i class="grip"></i><svg class="b"><use href="#dsm"/></svg><svg class="b"><use href="#box"/></svg><svg class="b"><use href="#vees"/></svg><svg class="b"><use href="#quills"/></svg><svg class="b"><use href="#chip"/></svg></div>
<svg class="b off"><use href="#clip"/></svg><svg class="b off"><use href="#undo"/></svg><svg class="b off"><use href="#redo"/></svg><svg class="b"><use href="#bee"/></svg><svg class="b off"><use href="#pen2"/></svg><svg class="b off"><use href="#eraser"/></svg><i class="grip"></i>
<svg class="b nudge"><use href="#abc"/></svg><svg class="b"><use href="#chart"/></svg><i class="vs"></i><svg class="b"><use href="#abt"/></svg><svg class="b"><use href="#abcr"/></svg><i class="vs n"></i><svg class="b off"><use href="#abg"/></svg><svg class="b off"><use href="#abeye"/></svg><svg class="b off"><use href="#abx"/></svg><svg class="b off"><use href="#abr"/></svg><svg class="b off"><use href="#abp"/></svg><i class="grip"></i>
<svg class="b"><use href="#gbino"/></svg><i class="grip"></i><svg class="b"><use href="#python"/></svg><svg class="b"><use href="#bino2"/></svg><svg class="b"><use href="#plug"/></svg><svg class="b"><use href="#plug"/></svg><svg class="b"><use href="#bug"/></svg><svg class="b"><use href="#hammer"/></svg><svg class="b"><use href="#rot"/></svg><i class="dd"></i><svg class="b"><use href="#frame"/></svg><svg class="b"><use href="#tools"/></svg><i class="grip"></i>
<svg class="b"><use href="#help"/></svg><i class="grip"></i><svg class="b"><use href="#cross"/></svg><i class="grip"></i><svg class="b"><use href="#recth"/></svg><i class="grip"></i>
<svg class="b off"><use href="#s1"/></svg><i class="dd off"></i><svg class="b off"><use href="#s2"/></svg><i class="dd off"></i><svg class="b off"><use href="#s3"/></svg><i class="dd off"></i><svg class="b off"><use href="#s4"/></svg><i class="dd off"></i><svg class="b off"><use href="#s5"/></svg><i class="dd off"></i>
</div>

<main class="work">
<aside class="docks">
<h2 class="dock">Browser</h2>
<div class="mini"><svg><use href="#addl"/></svg><svg><use href="#refresh"/></svg><svg><use href="#funnel"/></svg><svg><use href="#coll"/></svg><svg><use href="#infoc"/></svg></div>
<ul class="tree">
<li><svg><use href="#fav"/></svg>Favorites</li>
<li class="x"><svg><use href="#mapb"/></svg>Spatial Bookmarks</li>
<li class="x"><svg><use href="#home"/></svg>Home</li>
<li class="x"><svg><use href="#folder"/></svg>/</li>
<li><svg><use href="#boxo"/></svg>GeoPackage</li>
<li class="x"><svg><use href="#quill"/></svg>SpatiaLite</li>
<li class="x"><svg><use href="#eleo"/></svg>PostGIS</li>
<li><svg><use href="#mssql"/></svg>MSSQL</li>
<li><svg><use href="#db2"/></svg>DB2</li>
<li class="x"><svg><use href="#globeo"/></svg>WMS/WMTS</li>
<li class="x"><svg><use href="#globeo"/></svg>XYZ Tiles</li>
<li><svg><use href="#globe2o"/></svg>WCS</li>
<li class="x"><svg><use href="#wfso"/></svg>WFS</li>
<li class="x"><svg><use href="#ows"/></svg>OWS</li>
<li><svg><use href="#arcm"/></svg>ArcGisMapServer</li>
<li><svg><use href="#arcf"/></svg>ArcGisFeatureServer</li>
<li><svg><use href="#flake"/></svg>GeoNode</li>
</ul>
<h2 class="dock layers">Layers</h2>
<div class="mini"><svg><use href="#brush"/></svg><svg><use href="#grp"/></svg><svg><use href="#eye"/></svg><svg><use href="#funnel"/></svg><svg><use href="#eps"/></svg><i class="dd"></i><svg><use href="#collb"/></svg></div>
<div class="legend"><div class="lrow"><span class="chk"><svg viewBox="0 0 12 12"><path d="M2.500 6l2.500 4L9.500 1.500" fill="none" stroke="#000" stroke-width="1.900"/></svg></span><span class="swatch"></span><span class="lname">AD_2_Municipality</span></div></div>
</aside>
<section class="canvas"><svg id="map-view" viewBox="534 128 1331 893" width="1331" height="893"></svg></section>
</main>

<footer class="status">
<div class="field locate"><svg><use href="#mag"/></svg><span>Type to locate (Ctrl+K)</span></div>
<span class="lab coord">Coordinate</span><div class="field fc">406888,686335</div><svg class="si"><use href="#mouse"/></svg>
<span class="lab scale">Scale</span><div class="field fs"><span>1:1727661</span><b><i class="tri"></i></b></div><svg class="si lk"><use href="#lock"/></svg>
<span class="lab magn">Magnifier</span><div class="field fm"><span>100%</span><b class="spin"><i class="tri up"></i><i class="tri"></i></b></div>
<span class="lab rota">Rotation</span><div class="field fr"><span>0,0 °</span><b class="spin"><i class="tri up"></i><i class="tri"></i></b></div>
<span class="chk"><svg viewBox="0 0 12 12"><path d="M2.500 6l2.500 4L9.500 1.500" fill="none" stroke="#000" stroke-width="1.900"/></svg></span><span class="lab rend">Render</span>
<svg class="si"><use href="#crs"/></svg><span class="lab epsg">EPSG:3812</span><svg class="si ms"><use href="#msg"/></svg>
</footer>

<div class="menu">
<div class="mi"><svg><use href="#dsm"/></svg><span class="t"><u>D</u>ata Source Manager</span><kbd>Ctrl+L</kbd></div>
<div class="mi sub"><span>Create Layer</span></div>
<div class="mi sub"><span>Add Layer</span></div>
<div class="mi"><span>Embed Layers and Groups…</span></div>
<div class="mi"><span class="w">Add from Layer Definition File…</span></div>
<hr>
<div class="mi"><svg><use href="#copy"/></svg><span>Copy Style</span></div>
<div class="mi dis"><svg><use href="#clip"/></svg><span>Paste Style</span></div>
<hr>
<div class="mi"><svg><use href="#copy"/></svg><span>Copy Layer</span></div>
<div class="mi dis"><svg><use href="#clip"/></svg><span>Paste Layer/Group</span></div>
<hr>
<div class="mi hot"><svg><use href="#tablew"/></svg><span class="w">Open <u>A</u>ttribute Table</span><kbd>F6</kbd></div>
<div class="mi"><svg><use href="#pencil"/></svg><span>Toggle Editing</span></div>
<div class="mi dis"><svg><use href="#save"/></svg><span>Save Layer Edits</span></div>
<div class="mi dis sub"><svg><use href="#pencil"/></svg><span>Current Edits</span></div>
<hr>
<div class="mi"><span><u>S</u>ave As…</span></div>
<div class="mi"><span class="w">Save As Layer Definition File…</span></div>
<div class="mi"><svg><use href="#rem"/></svg><span>Remove Layer/Group</span><kbd>Ctrl+D</kbd></div>
<div class="mi"><svg><use href="#dup"/></svg><span>Duplicate Layer(s)</span></div>
<div class="mi"><span class="w">Set Scale Visibility of Layer(s)</span></div>
<div class="mi"><span>Set CRS of Layer(s)</span><kbd>Ctrl+Shift+C</kbd></div>
<div class="mi"><span class="w">Set Project CRS from Layer</span></div>
<div class="mi"><span class="w">Layer <u>P</u>roperties…</span></div>
<div class="mi"><span class="w">Filter…</span><kbd>Ctrl+F</kbd></div>
<div class="mi"><svg><use href="#abc"/></svg><span class="t">Labeling</span></div>
<hr>
<div class="mi"><svg><use href="#gla"/></svg><span>Show in Overview</span></div>
<div class="mi"><svg><use href="#glm"/></svg><span>Show All in Overview</span></div>
<div class="mi"><svg><use href="#glh"/></svg><span>Hide All from Overview</span></div>
</div>
<svg class="cursor" viewBox="0 0 12 20"><path d="M1 1v15l3.500-3 2.500 6 2.500-1L7 12h4.500z" fill="#000" stroke="#fff" stroke-width="1.200"/></svg>
<script src="map.js"></script>
</body>
</html>
```
FILE: styles.css
```css
* { box-sizing: border-box; }
body { margin: 0; width: 1865px; height: 1053px; overflow: hidden; display: flex; flex-direction: column; background: #efebe7; color: #000; font: 14.5px/19px "Noto Sans", sans-serif; letter-spacing: -0.3px; position: relative; }
.sprite { position: absolute; }
u { text-decoration: underline; text-decoration-thickness: 1px; text-underline-offset: 2px; }

.titlebar { height: 28px; flex: none; background: linear-gradient(#3c3b37, #4a4842); display: flex; align-items: center; justify-content: center; position: relative; }
.title { color: #dfdbd2; font-weight: 700; font-size: 14px; letter-spacing: .25px; line-height: 26px; height: 28px; }
.winbtns { position: absolute; right: 5px; top: 6px; display: flex; gap: 4px; }
.wb { width: 16px; height: 16px; border-radius: 50%; background: linear-gradient(#8e8d86, #65645e); box-shadow: 0 0 0 .5px #2c2b28; display: flex; }
.wb.close { background: linear-gradient(#f5835c, #e2501f); }
.wb svg { width: 16px; height: 16px; }

.menubar { height: 22px; flex: none; display: grid; grid-template-columns: 65px 42px 51px 45px 71px 64px 59px 57px 79px 45px 52px 87px 60px; align-items: center; white-space: nowrap; border-bottom: 1px solid #d0ccc7; letter-spacing: -.25px; }
.menubar span { padding-left: 7px; height: 22px; line-height: 21px; }
.menubar span:first-child { padding-left: 10px; }
.menubar .active { background: #308cc6; color: #fff; border: 1px solid #256d9b; padding-left: 3px; line-height: 19px; }
.menubar span:nth-child(n+5) { padding-left: 10px; }

.toolbar { height: 39px; flex: none; display: flex; align-items: center; background: linear-gradient(#f8f5f1, #eeebe6); border-bottom: 1px solid #b4b0ab; }
.lead { width: 556.5px; flex: none; display: flex; align-items: center; }
.second .lead { width: 542.5px; }
.second { border-bottom-width: 2px; }
.b { width: 33px; height: 24px; flex: none; padding: 0 4.5px; overflow: visible; }
.nudge { margin-left: -2px; margin-right: 2px; }
.off { opacity: .35; }
.grip { width: 16px; height: 18px; flex: none; padding: 0 3px 0 8px; background: repeating-linear-gradient(transparent 0 2px, #f3f0ec 2px 3px), repeating-linear-gradient(90deg, #b0aca7 0 1px, transparent 1px 3px) 8px 0; background: conic-gradient(from 270deg at 1.5px 1.5px, #aca8a3 25%, transparent 0) 0 0 / 4px 3px; background-origin: content-box; background-clip: content-box; }
.lead .grip { width: 12.5px; padding: 0 4px; }
.dd { width: 12px; height: 6px; flex: none; background: #3c3c3c; clip-path: polygon(1px 0, 11px 0, 6px 5.5px); }
.dd.off { opacity: .25; }
.pressed { width: 33px; height: 31px; flex: none; border: 1px solid #aaa5a0; border-radius: 3px; background: #dedad6; display: flex; align-items: center; justify-content: center; }
.pressed svg { width: 24px; height: 24px; }
.vs { width: 8px; height: 19px; flex: none; background: linear-gradient(#c6c2bd, #c6c2bd) 3px 0 / 1px 100% no-repeat; }
.vs.n { width: 6px; }

.work { flex: 1; display: flex; gap: 6px; min-height: 0; }
.docks { width: 528px; display: flex; flex-direction: column; }
.dock { margin: 0; height: 19px; padding-left: 4px; font-size: 14.5px; font-weight: 400; line-height: 18px; letter-spacing: -.1px; }
.dock.layers { height: 25px; line-height: 32px; }
.mini { height: 31px; flex: none; display: flex; align-items: center; padding: 0 0 1px 8px; gap: 9.5px; }
.mini svg { width: 16px; height: 16px; }
.layers + .mini { height: 32px; padding-bottom: 0; }
.mini .dd { margin-left: -6px; margin-right: -6px; transform: scale(.85); }
.tree { margin: 0; padding: 0; list-style: none; height: 388px; flex: none; background: #fff; border: 1px solid #b4b0ab; letter-spacing: -.15px; }
.tree li { height: 19px; display: flex; align-items: center; padding-left: 23px; gap: 6px; position: relative; line-height: 18px; }
.tree svg { width: 16px; height: 16px; flex: none; }
.tree .x::before { content: ""; position: absolute; left: 7px; top: 4px; border: 5px solid transparent; border-left: 6px solid #444; border-right: 0; }
.legend { flex: 1; background: #fff; border: 1px solid #b4b0ab; }
.lrow { height: 19px; background: #308cc6; display: flex; align-items: center; padding-left: 22px; line-height: 18px; }
.chk { width: 14px; height: 14px; background: #fff; border: 1px solid #9b9792; display: flex; flex: none; }
.chk svg { width: 12px; height: 12px; }
.swatch { width: 15px; height: 16px; background: #7eac72; border: 1px solid #6e9964; margin-left: 8px; }
.lname { margin-left: 7px; color: #fff; font-weight: 700; text-decoration: underline; text-decoration-thickness: 1px; text-underline-offset: 2px; letter-spacing: .2px; }
.canvas { flex: 1; background: #fff; border: 1px solid #b4b0ab; border-top: 0; overflow: hidden; }
.canvas svg { display: block; margin-left: -1px; }

.status { height: 31px; flex: none; display: flex; align-items: center; padding-left: 4px; font-size: 12.5px; letter-spacing: -.25px; white-space: nowrap; }
.field { height: 24px; background: #fff; border: 1px solid #aeaaa5; border-radius: 3px; display: flex; align-items: center; flex: none; }
.field svg { width: 13px; height: 13px; margin: 0 8px; }
.locate { width: 273px; font-size: 14.5px; color: #777; letter-spacing: 0; }
.lab { flex: none; }
.coord { margin-left: 704px; width: 65px; }
.fc { width: 107px; padding-left: 10px; }
.si { width: 16px; height: 16px; margin-left: 4px; flex: none; }
.scale { margin-left: 12px; width: 33px; }
.field b { margin-left: auto; width: 19px; height: 22px; border-left: 1px solid #c9c5c0; background: linear-gradient(#f8f5f1, #eeebe6); display: flex; flex-direction: column; align-items: center; justify-content: center; gap: 5px; }
.field b.spin { width: 13px; }
.field span { padding-left: 4px; }
.locate span { padding: 0; }
.tri { border: 4px solid transparent; border-top: 5px solid #555; border-bottom: 0; }
.tri.up { transform: rotate(180deg); }
.fs { width: 96px; }
.lk { margin-left: 11px; }
.magn { margin-left: 7px; width: 56px; }
.fm { width: 98px; }
.rota { margin-left: 9px; width: 57px; }
.fr { width: 94px; margin-right: 6px; }
.rend { margin-left: 5px; width: 57px; }
.rend + .si { margin-left: 0; }
.epsg { margin-left: 3px; margin-right: auto; }
.ms { margin-right: 7px; }

.menu { position: absolute; left: 158px; top: 50px; width: 401px; height: 660px; background: #fff; box-shadow: inset 0 0 0 1px #8f8c88, 1px 1px 2px rgba(0,0,0,.3); letter-spacing: -.05px; }
.mi { height: 25px; display: flex; align-items: center; padding-left: 28px; position: relative; white-space: nowrap; line-height: 25px; }
.mi svg { width: 16px; height: 16px; margin-left: -21px; margin-right: 5px; }
.mi kbd { position: absolute; left: 302px; font: inherit; }
.w { letter-spacing: .1px; }
.t { letter-spacing: -.12px; }
.mi.dis { color: #bebebe; }
.mi.dis svg { opacity: .35; filter: grayscale(1); }
.hot { background: #308cc6; color: #fff; box-shadow: inset 0 0 0 1px #256d9b; }
.sub::after { content: ""; position: absolute; right: 5px; top: 7px; border: 5px solid transparent; border-left: 6px solid #444; border-right: 0; }
.sub.dis::after { border-left-color: #bebebe; }
.menu hr { margin: 0 5px; height: 2px; border: 0; border-top: 1px solid #b8b8b8; }
.cursor { position: absolute; left: 278px; top: 284px; width: 12px; height: 20px; }
```
FILE: map.js
```js
// Draws the municipality layer: a country outline filled with irregular cells.
const outline = [790,442,820,427,837,417,850,408,858,403,873,393,887,387,887,380,894,380,899,383,917,377,918,384,919,388,917,393,919,401,929,409,940,409,940,399,950,395,960,398,973,403,982,406,982,417,992,417,997,415,998,419,1001,416,1010,413,1017,409,1023,409,1039,398,1051,384,1047,378,1065,377,1066,382,1075,382,1079,379,1074,368,1073,360,1083,354,1096,352,1094,363,1098,365,1115,366,1116,360,1130,346,1141,352,1141,363,1132,364,1132,367,1150,369,1157,371,1168,357,1171,351,1179,355,1181,363,1178,374,1185,383,1187,392,1197,390,1203,393,1202,403,1220,401,1232,402,1242,395,1251,402,1252,413,1266,419,1283,422,1286,429,1293,427,1297,432,1291,437,1294,443,1289,447,1290,451,1285,454,1285,465,1279,475,1283,478,1277,488,1275,493,1267,498,1267,507,1274,513,1274,526,1286,520,1292,523,1300,523,1305,527,1307,525,1315,525,1327,527,1330,533,1341,534,1349,548,1349,555,1364,557,1358,564,1355,568,1351,578,1358,587,1376,588,1382,597,1378,615,1387,627,1382,632,1371,632,1368,643,1357,650,1354,663,1347,667,1349,674,1346,677,1343,671,1333,670,1328,665,1320,668,1318,677,1308,682,1307,692,1304,697,1303,703,1298,707,1300,715,1291,722,1287,732,1292,742,1287,745,1287,761,1295,762,1301,777,1308,778,1306,788,1313,793,1308,803,1307,812,1300,820,1288,817,1285,822,1271,820,1267,830,1262,827,1252,829,1245,833,1243,827,1242,817,1237,805,1227,802,1219,804,1221,795,1212,786,1195,785,1193,781,1190,780,1185,770,1173,766,1166,761,1147,763,1148,753,1146,745,1151,732,1136,720,1142,703,1143,698,1145,690,1150,678,1147,674,1132,677,1123,687,1120,712,1107,715,1095,723,1083,727,1068,723,1060,720,1043,722,1035,717,1033,707,1048,697,1043,688,1044,681,1033,679,1037,668,1037,660,1045,655,1045,646,1037,643,1036,649,1033,647,1032,639,1023,633,1017,626,1010,628,998,633,992,627,973,626,968,637,960,625,961,600,953,592,936,592,935,584,930,583,925,588,916,591,901,581,901,563,896,548,898,538,890,537,888,528,883,522,882,518,876,518,873,523,862,522,849,528,848,535,843,541,835,535,830,534,822,525,815,512,802,511,798,502,798,490,797,485,802,482,802,470,795,465,793,453];

// Cell centres by area, as offsets (in thirds of a unit) from each origin.
const groups = [
[770,330,[80,350,125,318,112,380,175,318,205,280,250,295,255,240,290,225,335,190,330,228,370,220,415,160,425,225,475,265,485,335,545,230,600,240,528,272,562,262,600,300,425,300,375,320,325,315,285,330,205,370,265,370,320,370,105,430,155,410,150,465,125,510,205,510,215,430,270,440,330,450,265,520,355,420,385,370,440,400,450,370,530,325,525,380,590,365,480,410,180,575,220,600,255,565,300,540,345,525,390,550,440,565,375,590,395,460,500,510,545,510,585,505,490,450,540,460,575,465,630,455,690,435,700,395,660,335,710,330,700,280,780,290,835,215,905,250,860,150,940,88,940,130,850,290,850,350,760,365,800,395,850,415,765,450,660,520,730,545,610,560,565,570,520,620,545,645,480,625,450,690,555,700,625,670,645,620,700,600,740,660,790,650,750,730,700,700,630,720,680,765,440,750,410,745,530,760,580,755,630,790,710,815,790,800,590,830,590,860,590,895,640,835,700,880,780,870,830,800,880,830,930,830,880,700,940,700,860,750,905,750,850,890,920,900,1020,930]],
[1100,330,[30,125,95,80,35,165,95,150,140,140,175,170,205,120,200,180,240,170,60,200,110,235,45,225,175,235,240,215,255,240,285,210,340,245,385,255,430,225,460,265,190,280,250,270,285,295,360,315,410,300,490,300,535,295,570,300,545,335,460,350,385,370,530,380,310,365,230,325,50,260,50,300,80,350,140,330,135,380,235,370,285,410,180,420,225,440,375,415,430,435,340,455,465,450,510,430,500,485,385,475,445,500,400,520,345,530,300,540,250,530,220,490,160,470,175,550,130,580,415,580,485,555,270,605,230,645,140,610,60,590,60,500,350,580,340,610,475,610,550,600,600,600,640,610,700,620,730,660,620,655,670,650,710,700,660,740,570,660,510,760,590,740,535,800,620,780,580,840,690,800,730,770,775,790,760,880,815,840,840,890,475,670,480,640,425,700,370,720,300,740,240,740,190,720,140,700,110,740,60,730,145,810,230,790,285,820,350,840,430,870,380,790,430,780,430,815]],
[1000,600,[100,60,90,105,150,110,190,90,235,95,285,85,345,100,420,100,480,100,240,145,340,150,420,145,485,140,550,130,635,130,570,85,655,100,710,130,750,180,150,170,140,215,200,200,240,200,300,220,390,200,350,245,180,280,260,310,330,300,140,330,495,195,590,220,660,180,675,235,740,260,780,210,860,220,915,190,870,120,810,115,940,110,1020,180,1030,120,1060,70,1130,60,485,270,555,290,620,280,665,300,745,295,810,285,875,290,855,350,455,345,530,330,620,340,705,370,775,340,800,370,515,390,575,370,570,415,630,430,710,440,780,460,840,420,470,440,540,470,645,485,850,465,625,530,690,530,740,560,800,520,870,510,800,580,890,560,830,605,895,605,685,600,735,620,780,640,830,640,890,640,740,670,740,70]]];

let seed = 20191;
const rnd = () => (seed = (seed * 16807) % 2147483647) / 2147483647;
const seeds = [];
for (const [ox, oy, p] of groups) for (let i = 0; i < p.length; i += 2) seeds.push([ox + p[i] / 3, oy + p[i + 1] / 3]);

// Minimum spacing of the extra cells: tight round the cities, wide in the south.
function spacing(x, y) {
  if (Math.hypot(x - 1074, y - 507) < 17) return 5;
  if (Math.hypot(x - 1283, y - 562) < 20) return 7;
  if (Math.hypot(x - 1070, y - 442) < 24) return 9;
  if (y > 640) return 24;
  if (x < 960) return 14;
  if (y < 410) return 16;
  return 11.5;
}
for (let i = 0; i < 30000; i++) {
  const x = 785 + rnd() * 605, y = 340 + rnd() * 500, r = spacing(x, y);
  if (seeds.every(s => Math.hypot(s[0] - x, s[1] - y) > r)) seeds.push([x, y]);
}
// A weight per cell varies the sizes.
for (const s of seeds) s[2] = rnd() * Math.min(90, spacing(s[0], s[1]) ** 2 * .55);

// Weighted cells, made by clipping a square with the dividing line to each neighbour.
function cell(s) {
  let poly = [[s[0] - 60, s[1] - 60], [s[0] + 60, s[1] - 60], [s[0] + 60, s[1] + 60], [s[0] - 60, s[1] + 60]];
  for (const t of seeds) {
    const dx = t[0] - s[0], dy = t[1] - s[1];
    if (t === s || dx * dx + dy * dy > 15000) continue;
    const c = dx * (s[0] + t[0]) / 2 + dy * (s[1] + t[1]) / 2 + (s[2] - t[2]) / 2;
    const side = p => p[0] * dx + p[1] * dy - c, out = [];
    poly.forEach((a, i) => {
      const b = poly[(i + 1) % poly.length], fa = side(a), fb = side(b);
      if (fa <= 0) out.push(a);
      if (fa * fb < 0) { const k = fa / (fa - fb); out.push([a[0] + (b[0] - a[0]) * k, a[1] + (b[1] - a[1]) * k]); }
    });
    poly = out;
  }
  return poly;
}
// Moves a corner by a smooth field so that shared corners stay shared.
const warp = ([x, y]) => [x + 2.4 * Math.sin(y * .31 + x * .17) + 1.5 * Math.sin(y * .8 - x * .3), y + 2.4 * Math.sin(x * .29 - y * .13) + 1.5 * Math.cos(x * .75 + y * .4)];
function rough(a, b, amp) {
  const d = Math.hypot(b[0] - a[0], b[1] - a[1]);
  if (d < 2.6) return [b];
  const k = (rnd() - .5) * amp, m = [(a[0] + b[0]) / 2 - (b[1] - a[1]) * k, (a[1] + b[1]) / 2 + (b[0] - a[0]) * k];
  return [...rough(a, m, amp), ...rough(m, b, amp)];
}
const fmt = p => p[0].toFixed(1) + ' ' + p[1].toFixed(1);
const seen = new Set();
let lines = '';
for (const s of seeds) {
  const p = cell(s);
  p.forEach((a, i) => {
    const b = p[(i + 1) % p.length], key = [a, b].map(q => Math.round(q[0] * 2) + ',' + Math.round(q[1] * 2)).sort().join();
    if (seen.has(key)) return;
    seen.add(key);
    const wa = warp(a), wb = warp(b);
    lines += 'M' + fmt(wa) + 'L' + rough(wa, wb, .55).map(fmt).join(' ');
  });
}
const pts = [];
for (let i = 0; i < outline.length; i += 2) pts.push([outline[i], outline[i + 1]]);
let edge = 'M' + fmt(pts[0]) + 'L';
pts.forEach((a, i) => { edge += rough(a, pts[(i + 1) % pts.length], a[0] > 1200 || a[1] > 450 ? .4 : .12).map(fmt).join(' ') + ' '; });
edge += 'Z';
document.getElementById('map-view').innerHTML =
  `<clipPath id="land"><path d="${edge}"/></clipPath><path d="${edge}" fill="#a2b54d"/>` +
  `<path d="${lines}" clip-path="url(#land)" fill="none" stroke="#232323" stroke-width=".85"/>` +
  `<path d="${edge}" fill="none" stroke="#232323" stroke-width=".9"/>` +
  `<path d="M1153 361l2-3 3-1-1 4-2 3z" fill="#232323" stroke="#232323"/>` +
  `<path d="M1349 547l4 2-2 3 5 1 7-1 2 4M1359 566l-1 6-5 8M1145 366l4 2 3-1 3 4" fill="none" stroke="#232323" stroke-width=".8"/>`;
```
